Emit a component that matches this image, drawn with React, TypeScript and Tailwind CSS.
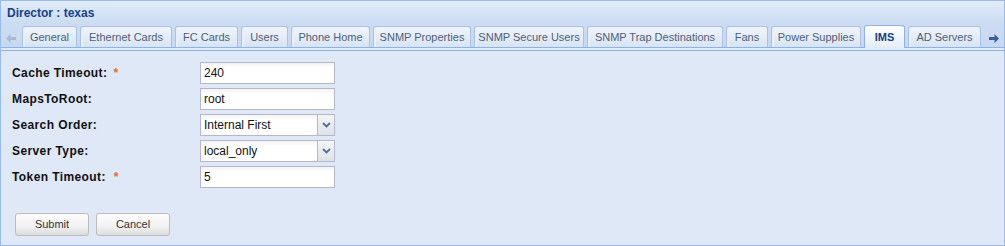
import { ReactNode } from "react";

const tabs = [
  { name: "General", w: "w-[55px]" },
  { name: "Ethernet Cards", w: "w-[92px]" },
  { name: "FC Cards", w: "w-[63px]" },
  { name: "Users", w: "w-[47px]" },
  { name: "Phone Home", w: "w-[79px]" },
  { name: "SNMP Properties", w: "w-[98px]" },
  { name: "SNMP Secure Users", w: "w-[110px]" },
  { name: "SNMP Trap Destinations", w: "w-[136px]" },
  { name: "Fans", w: "w-[42px]" },
  { name: "Power Supplies", w: "w-[90px]" },
  { name: "IMS", w: "w-[41px]", active: true },
  { name: "AD Servers", w: "w-[73px]" },
];

function Chevron() {
  return (
    <svg width="9" height="6" viewBox="0 0 9 6">
      <path d="M1 1 L4.5 4.5 L8 1" stroke="#4f6f9e" strokeWidth="1.8" fill="none" />
    </svg>
  );
}

function Arrow({ dir, color }: { dir: "left" | "right"; color: string }) {
  return (
    <svg width="10" height="9" viewBox="0 0 10 9" className={dir === "left" ? "" : "rotate-180"}>
      <path d="M0 4.5 L4.5 0 L4.5 3 L10 3 L10 6 L4.5 6 L4.5 9 Z" fill={color} />
    </svg>
  );
}

function Field({ label, required, spaced, children }: { label: string; required?: boolean; spaced?: boolean; children: ReactNode }) {
  return (
    <div className="flex items-center h-[22px]">
      <div className="w-[188px] text-[12px] font-bold tracking-[0.4px] text-[#111]">
        {label}
        {required && (
          <span className={`text-[#ec6a1f] font-bold ${spaced ? "ml-[8px]" : "ml-[6px]"}`}>*</span>
        )}
      </div>
      {children}
    </div>
  );
}

function TextBox({ value }: { value: string }) {
  return (
    <div className="w-[135px] h-[22px] border border-[#b5b8c8] bg-gradient-to-b from-[#f3f3f3] via-white via-[25%] to-white flex items-center pl-[3px] text-[12px] text-[#111]">
      {value}
    </div>
  );
}

function Combo({ value }: { value: string }) {
  return (
    <div className="w-[135px] h-[22px] border border-[#b5b8c8] flex text-[12px] text-[#111]">
      <div className="flex-1 bg-gradient-to-b from-[#f3f3f3] via-white via-[25%] to-white flex items-center pl-[3px]">
        {value}
      </div>
      <div className="w-[17px] border-l border-[#b5b8c8] bg-gradient-to-b from-[#f4f5f8] to-[#dde2ea] flex items-center justify-center">
        <Chevron />
      </div>
    </div>
  );
}

function Button({ label }: { label: string }) {
  return (
    <div className="w-[74px] h-[23px] rounded-[3px] border border-[#bcbcbc] bg-gradient-to-b from-[#fdfdfd] via-[#f1f1f1] via-[60%] to-[#dcdcdc] flex items-center justify-center text-[11px] text-[#333]">
      {label}
    </div>
  );
}

export default function App() {
  return (
    <div className="w-[1005px] h-[246px] border border-[#99bbe8] flex flex-col font-['Liberation_Sans',Arial,sans-serif] overflow-hidden">
      {/* HEADER */}
      <div className="h-[23px] shrink-0 bg-gradient-to-b from-[#e2ecf8] to-[#cadcf3] flex items-center px-[6px] pt-[1px]">
        <span className="text-[12px] font-bold text-[#15428b]">Director : texas</span>
      </div>

      {/* TAB STRIP */}
      <div className="h-[24px] shrink-0 bg-gradient-to-b from-[#cddcf2] to-[#c6d8f1] flex items-end border-b border-[#8db2e3]">
        <div className="w-[20px] h-full flex items-center justify-center pt-[5px]">
          <Arrow dir="left" color="#a9bcd6" />
        </div>
        <div className="flex items-end gap-[3px] ml-[1px]">
          {tabs.map((t) =>
            t.active ? (
              <div
                key={t.name}
                className={`${t.w} h-[23px] -mb-[1px] rounded-t-[3px] border border-b-0 border-[#8db2e3] bg-gradient-to-b from-white to-[#e4edf8] flex items-center justify-center pt-[1px] text-[11px] font-bold text-[#15428b]`}
              >
                {t.name}
              </div>
            ) : (
              <div
                key={t.name}
                className={`${t.w} h-[21px] rounded-t-[3px] border border-b-0 border-[#a9c3e6] shadow-[inset_2px_0_0_#e9f0f9] bg-gradient-to-b from-[#f1f5fb] to-[#d8e4f3] flex items-center justify-center pt-[1px] text-[11px] text-[#4e5f7a]`}
              >
                {t.name}
              </div>
            )
          )}
        </div>
        <div className="flex-1 h-full flex items-center justify-end pr-[5px] pt-[5px]">
          <Arrow dir="right" color="#3a5f94" />
        </div>
      </div>
      <div className="h-[3px] shrink-0 bg-[#deecfd] border-b border-[#8db2e3]" />

      {/* BODY */}
      <div className="flex-1 bg-[#dfe8f6] pl-[11px] pt-[11px] flex flex-col">
        <div className="flex flex-col gap-[4px]">
          <Field label="Cache Timeout:" required>
            <TextBox value="240" />
          </Field>
          <Field label="MapsToRoot:">
            <TextBox value="root" />
          </Field>
          <Field label="Search Order:">
            <Combo value="Internal First" />
          </Field>
          <Field label="Server Type:">
            <Combo value="local_only" />
          </Field>
          <Field label="Token Timeout:" required spaced>
            <TextBox value="5" />
          </Field>
        </div>
        <div className="flex gap-[7px] mt-[25px] ml-[3px]">
          <Button label="Submit" />
          <Button label="Cancel" />
        </div>
      </div>
    </div>
  );
}
